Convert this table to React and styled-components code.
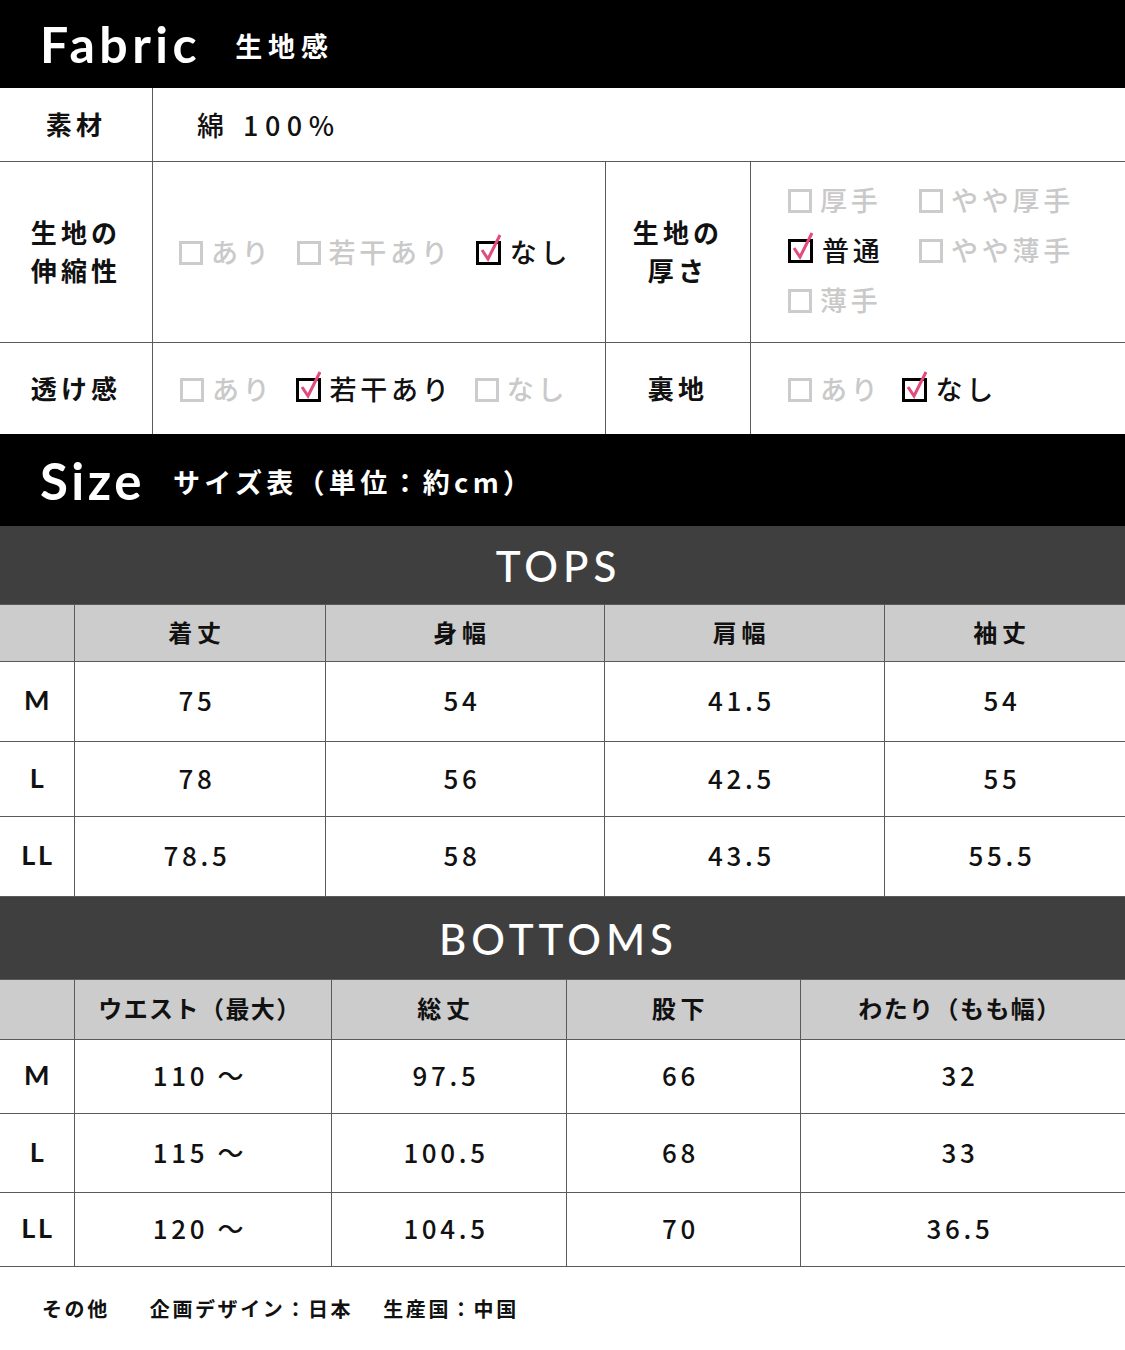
import React from 'react';
import styled, { createGlobalStyle } from 'styled-components';

const JP = `"Noto Sans CJK JP", "Noto Sans", sans-serif`;
const LATIN = `Lato, "Noto Sans", sans-serif`;
const LINE = '#5a5a5a';
const PINK = '#e24a80';

const GlobalStyle = createGlobalStyle`
  html, body {
    margin: 0;
    padding: 0;
    background: #fff;
  }
  body {
    font-family: ${JP};
    color: #111;
  }
`;

const Page = styled.div`
  width: 1125px;
  background: #fff;
`;

const SectionBar = styled.div`
  height: ${p => p.h}px;
  background: #000;
  color: #fff;
  display: flex;
  align-items: center;
  padding-left: 40px;
  gap: ${p => p.gap}px;
  box-sizing: border-box;
`;

const BigTitle = styled.span`
  font-family: ${LATIN};
  font-weight: 700;
  font-size: ${p => p.size}px;
  letter-spacing: ${p => p.ls}px;
  line-height: 1;
`;

const SubTitle = styled.span`
  font-family: ${JP};
  font-weight: 700;
  font-size: ${p => p.size}px;
  letter-spacing: ${p => p.ls};
  padding-top: 2px;
`;

const FabricRow = styled.div`
  display: grid;
  grid-template-columns: ${p => p.cols};
  height: ${p => p.h}px;
  border-bottom: ${p => (p.last ? 'none' : `1px solid ${LINE}`)};
`;

const LabelCell = styled.div`
  display: flex;
  align-items: center;
  justify-content: center;
  text-align: center;
  font-size: 26px;
  font-weight: 700;
  letter-spacing: 0.16em;
  line-height: 1.45;
  border-right: 1px solid ${LINE};
  padding-bottom: 2px;
`;

const ValueCell = styled.div`
  display: flex;
  align-items: center;
  padding-left: ${p => p.pl}px;
  border-right: ${p => (p.divider ? `1px solid ${LINE}` : 'none')};
  font-size: 27px;
  font-weight: 500;
  letter-spacing: 0.24em;
  box-sizing: border-box;
`;

const Options = styled.div`
  display: flex;
  align-items: center;
  gap: ${p => p.gap}px;
`;

const OptionGrid = styled.div`
  display: grid;
  grid-template-columns: 131px auto;
  row-gap: 14px;
  padding-bottom: 4px;
`;

const Option = styled.span`
  display: inline-flex;
  align-items: center;
  gap: 8px;
  font-size: 27px;
  font-weight: 500;
  letter-spacing: 0.14em;
  line-height: 36px;
  color: ${p => (p.on ? '#111' : '#c9c9c9')};
  white-space: nowrap;
`;

const EmptyBox = styled.span`
  display: inline-block;
  width: 18px;
  height: 18px;
  border: 3px solid #cccccc;
  flex: none;
  margin-top: 2px;
`;

const CheckSvg = styled.svg`
  flex: none;
  margin-top: -6px;
  margin-right: -4px;
`;

const Box = ({ on }) =>
  on ? (
    <CheckSvg width="30" height="32" viewBox="0 0 30 32">
      <rect x="1.5" y="9.5" width="22" height="21" fill="none" stroke="#000" strokeWidth="3" />
      <path d="M6 17 L12 26 L24 2" fill="none" stroke={PINK} strokeWidth="3" strokeLinejoin="miter" />
    </CheckSvg>
  ) : (
    <EmptyBox />
  );

const Opt = ({ on, children }) => (
  <Option on={on}>
    <Box on={on} />
    {children}
  </Option>
);

const Band = styled.div`
  height: ${p => p.h}px;
  background: #3f3f3f;
  color: #fff;
  display: flex;
  align-items: center;
  justify-content: center;
  font-family: ${LATIN};
  font-weight: 500;
  font-size: 42px;
  letter-spacing: 5px;
  padding-top: 2px;
  padding-right: 8px;
  box-sizing: border-box;
  border-bottom: 1px solid ${LINE};
`;

const TableRow = styled.div`
  display: grid;
  grid-template-columns: ${p => p.cols};
  height: ${p => p.h}px;
  background: ${p => (p.head ? '#cccccc' : '#fff')};
  border-bottom: 1px solid ${LINE};
  box-sizing: border-box;
`;

const Cell = styled.div`
  display: flex;
  align-items: center;
  justify-content: center;
  font-size: ${p => (p.head ? 24 : 26)}px;
  font-weight: ${p => (p.head ? 700 : 500)};
  letter-spacing: ${p => (p.tight ? '0.06em' : p.head ? '0.2em' : '0.14em')};
  border-right: ${p => (p.last ? 'none' : `1px solid ${LINE}`)};
  padding-right: 6px;
  padding-bottom: 4px;
  white-space: nowrap;
`;

const SizeCell = styled(Cell)`
  font-family: ${LATIN};
  font-weight: 700;
  font-size: 27px;
  letter-spacing: 0.1em;
  padding-right: 0;
  padding-left: 2px;
`;

const Footer = styled.div`
  height: 82px;
  display: flex;
  align-items: center;
  padding-left: 42px;
  gap: 40px;
  font-size: 20px;
  font-weight: 700;
  letter-spacing: 0.13em;
`;

const FooterGroup = styled.span`
  display: inline-flex;
  gap: 30px;
`;

const SizeTable = ({ title, bandH, cols, headH, heads, rows }) => (
  <>
    <Band h={bandH}>{title}</Band>
    <TableRow head cols={cols} h={headH}>
      <Cell head />
      {heads.map((h, i) => (
        <Cell head key={h} tight={h.length > 4} last={i === heads.length - 1}>
          {h}
        </Cell>
      ))}
    </TableRow>
    {rows.map(r => (
      <TableRow key={r.size} cols={cols} h={r.h}>
        <SizeCell>{r.size}</SizeCell>
        {r.values.map((v, i) => (
          <Cell key={i} last={i === r.values.length - 1}>
            {v}
          </Cell>
        ))}
      </TableRow>
    ))}
  </>
);

const TOPS = {
  cols: '75px 251px 279px 280px 1fr',
  heads: ['着丈', '身幅', '肩幅', '袖丈'],
  rows: [
    { size: 'M', h: 80, values: ['75', '54', '41.5', '54'] },
    { size: 'L', h: 75, values: ['78', '56', '42.5', '55'] },
    { size: 'LL', h: 80, values: ['78.5', '58', '43.5', '55.5'] },
  ],
};

const BOTTOMS = {
  cols: '75px 257px 235px 234px 1fr',
  heads: ['ウエスト（最大）', '総丈', '股下', 'わたり（もも幅）'],
  rows: [
    { size: 'M', h: 74, values: ['110 ～', '97.5', '66', '32'] },
    { size: 'L', h: 79, values: ['115 ～', '100.5', '68', '33'] },
    { size: 'LL', h: 74, values: ['120 ～', '104.5', '70', '36.5'] },
  ],
};

export default function App() {
  return (
    <Page>
      <GlobalStyle />
      <SectionBar h={88} gap={34}>
        <BigTitle size={50} ls={4.5}>Fabric</BigTitle>
        <SubTitle size={27} ls="0.22em">生地感</SubTitle>
      </SectionBar>

      <FabricRow cols="153px 1fr" h={73}>
        <LabelCell>素材</LabelCell>
        <ValueCell pl={44}>綿 100%</ValueCell>
      </FabricRow>

      <FabricRow cols="153px 453px 145px 1fr" h={180}>
        <LabelCell>
          生地の
          <br />
          伸縮性
        </LabelCell>
        <ValueCell pl={26} divider>
          <Options gap={24}>
            <Opt>あり</Opt>
            <Opt>若干あり</Opt>
            <Opt on>なし</Opt>
          </Options>
        </ValueCell>
        <LabelCell>
          生地の
          <br />
          厚さ
        </LabelCell>
        <ValueCell pl={37}>
          <OptionGrid>
            <Opt>厚手</Opt>
            <Opt>やや厚手</Opt>
            <Opt on>普通</Opt>
            <Opt>やや薄手</Opt>
            <Opt>薄手</Opt>
          </OptionGrid>
        </ValueCell>
      </FabricRow>

      <FabricRow cols="153px 453px 145px 1fr" h={91} last>
        <LabelCell>透け感</LabelCell>
        <ValueCell pl={27} divider>
          <Options gap={22}>
            <Opt>あり</Opt>
            <Opt on>若干あり</Opt>
            <Opt>なし</Opt>
          </Options>
        </ValueCell>
        <LabelCell>裏地</LabelCell>
        <ValueCell pl={37}>
          <Options gap={20}>
            <Opt>あり</Opt>
            <Opt on>なし</Opt>
          </Options>
        </ValueCell>
      </FabricRow>

      <SectionBar h={92} gap={28}>
        <BigTitle size={51} ls={3.5}>Size</BigTitle>
        <SubTitle size={27} ls="0.16em">サイズ表（単位：約cm）</SubTitle>
      </SectionBar>

      <SizeTable title="TOPS" bandH={79} headH={57} {...TOPS} />
      <SizeTable title="BOTTOMS" bandH={83} headH={60} {...BOTTOMS} />

      <Footer>
        <span>その他</span>
        <FooterGroup>
          <span>企画デザイン：日本</span>
          <span>生産国：中国</span>
        </FooterGroup>
      </Footer>
    </Page>
  );
}
